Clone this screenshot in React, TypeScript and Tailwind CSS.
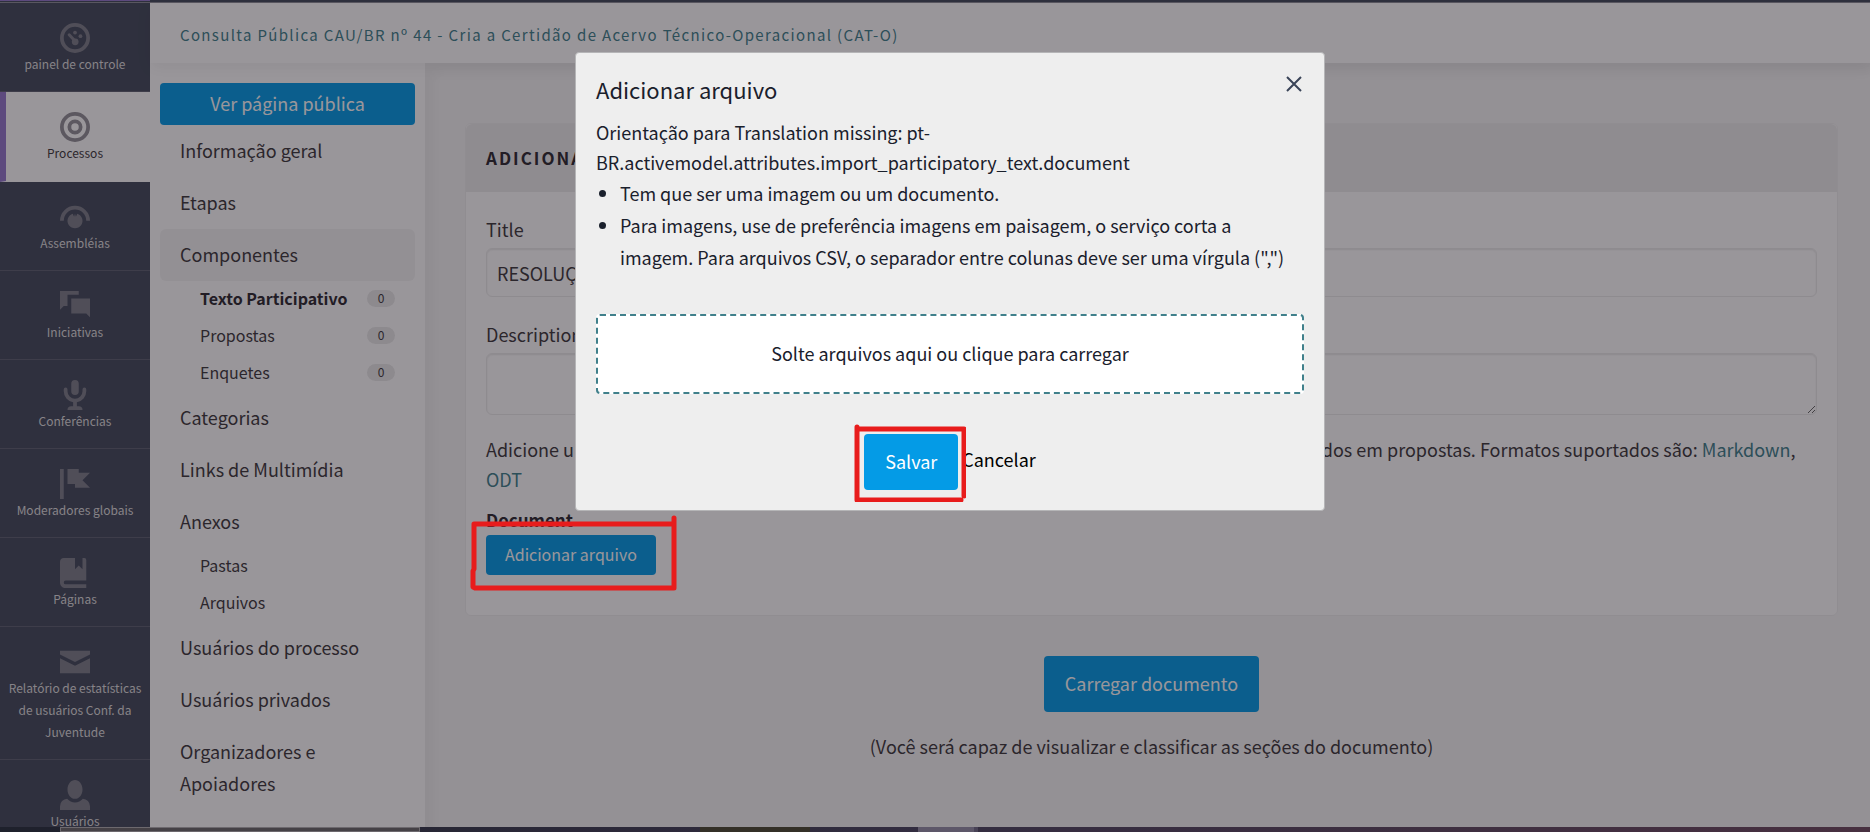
import type { ReactNode } from "react";

const navItems: { label: string; icon: ReactNode; active?: boolean }[] = [
  {
    label: "painel de controle",
    icon: (
      <>
        <circle cx="4" cy="4" r="3.5" fill="none" stroke="currentColor" />
        <path d="M2.45 3.15L4 4.8" fill="none" stroke="currentColor" strokeWidth=".8" strokeLinecap="round" />
        <circle cx="4" cy="2.55" r=".5" />
        <circle cx="5.45" cy="3.5" r=".5" />
        <circle cx="4.05" cy="5" r=".9" />
      </>
    ),
  },
  {
    label: "Processos",
    active: true,
    icon: (
      <g fill="none" stroke="currentColor">
        <circle cx="4" cy="4" r="3.5" />
        <circle cx="4" cy="4" r="1.5" />
      </g>
    ),
  },
  {
    label: "Assembléias",
    icon: (
      <path d="M4 1a4 4 0 0 0-4 4h1a3 3 0 0 1 6 0h1a4 4 0 0 0-4-4zM4.6 3.1L4.25 3.9 4 3.1l-.25.8-.35-.8A2 2 0 1 0 4.6 3.1z" />
    ),
  },
  {
    label: "Iniciativas",
    icon: <path d="M0 0v5l1-1h1V1h3V0H0zm3 2v4h4l1 1V2H3z" />,
  },
  {
    label: "Conferências",
    icon: (
      <path d="M4 0a1.03 1.03 0 0 0-1 1.06V3a1 1 0 0 0 2 0V1.06A1.03 1.03 0 0 0 4 0zM1.5 2a.5.5 0 0 0-.5.5V3a3.01 3.01 0 0 0 2.5 2.96V7H3a1 1 0 0 0-1 1h4a1 1 0 0 0-1-1h-.5V5.96A3.01 3.01 0 0 0 7 3v-.5a.5.5 0 1 0-1 0V3a2 2 0 1 1-4 0v-.5A.5.5 0 0 0 1.5 2z" />
    ),
  },
  {
    label: "Moderadores globais",
    icon: <path d="M0 0v8h1V0H0zm2 0v4h2v1h4L6 3l2-2H5V0H2z" />,
  },
  {
    label: "Páginas",
    icon: (
      <path d="M1 0C.45 0 0 .45 0 1v5.5C0 7.33.67 8 1.5 8H7V7H1.5a.5.5 0 0 1 0-1H7V.5a.5.5 0 0 0-.5-.5H6v3L5 2 4 3V0H1z" />
    ),
  },
  {
    label: "Relatório de estatísticas de usuários Conf. da Juventude",
    icon: <path d="M0 1v1l4 2 4-2V1H0zm0 2v4h8V3L4 5 0 3z" />,
  },
  {
    label: "Usuários",
    icon: (
      <path d="M4 0C2.9 0 2 1.12 2 2.5S2.9 5 4 5s2-1.12 2-2.5S5.1 0 4 0zM1.91 5A2 2 0 0 0 0 7v1h8V7a2 2 0 0 0-1.91-2A2.92 2.92 0 0 1 4 6a2.92 2.92 0 0 1-2.09-1z" />
    ),
  },
];

type Sub = { label: string; count?: number; active?: boolean };
const menu: { label: string; active?: boolean; children?: Sub[] }[] = [
  { label: "Informação geral" },
  { label: "Etapas" },
  {
    label: "Componentes",
    active: true,
    children: [
      { label: "Texto Participativo", count: 0, active: true },
      { label: "Propostas", count: 0 },
      { label: "Enquetes", count: 0 },
    ],
  },
  { label: "Categorias" },
  { label: "Links de Multimídia" },
  { label: "Anexos", children: [{ label: "Pastas" }, { label: "Arquivos" }] },
  { label: "Usuários do processo" },
  { label: "Usuários privados" },
  { label: "Organizadores e Apoiadores" },
];

function MainNav() {
  return (
    <nav className="w-[150px] shrink-0 overflow-hidden bg-[#434b5c]">
      <ul>
        {navItems.map((item) => (
          <li key={item.label}>
            <a
              href="#"
              className={
                item.active
                  ? "flex flex-col items-center border-b border-l-6 border-b-[#fefefe] border-l-[#9478cd] bg-[#fefefe] pt-5 pr-1.5 pb-[17px] text-center text-[12px] leading-[22px] text-[#3d393c]"
                  : "flex flex-col items-center border-b border-[#5e6271] px-1 pt-5 pb-4 text-center text-[12px] leading-[22px] text-[#dedcdd]"
              }
            >
              <svg
                viewBox="0 0 8 8"
                fill="currentColor"
                aria-hidden="true"
                className={item.active ? "size-[30px] shrink-0 text-[#929097]" : "size-[30px] shrink-0 text-[#7e7f8a]"}
              >
                {item.icon}
              </svg>
              {item.label}
            </a>
          </li>
        ))}
      </ul>
    </nav>
  );
}

function SideMenu() {
  return (
    <aside className="w-[275px] shrink-0 bg-[#fefefe] px-2.5 pt-5">
      <a
        href="#"
        className="flex h-[42px] items-center justify-center rounded bg-[#049be6] pb-0.5 text-[18px] text-[#fefefe]"
      >
        Ver página pública
      </a>
      <ul className="text-[18px] leading-8 text-[#3d393c]">
        {menu.map((entry) => (
          <li key={entry.label}>
            <a
              href="#"
              className={
                entry.active
                  ? "block rounded-md bg-[#f3f3f3] px-5 pt-[9px] pb-[11px]"
                  : "block px-5 pt-[9px] pb-[11px]"
              }
            >
              {entry.label}
            </a>
            {entry.children && (
              <ul className="text-[16px]">
                {entry.children.map((sub) => (
                  <li key={sub.label}>
                    <a href="#" className="flex h-[37px] items-center justify-between pr-5 pb-[3px] pl-10">
                      <span className={sub.active ? "font-bold text-[#2c2930]" : ""}>{sub.label}</span>
                      {sub.count !== undefined && (
                        <span className="flex h-[17px] w-7 items-center justify-center rounded-full bg-[#e8e8e8] text-[12px]">
                          {sub.count}
                        </span>
                      )}
                    </a>
                  </li>
                ))}
              </ul>
            )}
          </li>
        ))}
      </ul>
    </aside>
  );
}

function ImportForm() {
  return (
    <main className="min-w-0 flex-1 bg-[#f5f5f5] px-10 pt-[60px] text-[18px] leading-[30px] text-[#3d393c] shadow-[inset_10px_10px_12px_rgba(0,0,0,0.03)] 2xl:pr-8">
      <form>
        <section className="rounded-md border border-[#eeeeee] bg-[#fefefe]">
          <h2 className="flex h-[68px] items-center rounded-t-md bg-[#ececec] px-5 text-[17px] font-semibold tracking-[2px] text-[#2c2930] uppercase">
            Adicionar documento
          </h2>
          <div className="px-5 pt-[22px] pb-10">
            <label className="block">
              Title
              <input
                type="text"
                defaultValue="RESOLUÇÃO CAU/BR"
                className="mt-1 block h-[49px] w-full rounded-md border border-[#eaeaea] px-2.5 text-[18px] shadow-[inset_0_1px_2px_rgba(10,10,10,0.1)]"
              />
            </label>
            <label className="mt-[22px] block">
              Description
              <textarea className="mt-1 block h-[62px] w-full rounded-md border border-[#eaeaea] px-2.5 shadow-[inset_0_1px_2px_rgba(10,10,10,0.1)]" />
            </label>
            <p className="mt-[19px]">
              Adicione um documento de texto para ser importado. Cada seção, subseção ou artigo serão convertidos em
              propostas. Formatos suportados são:{" "}
              <a href="#" className="text-[#40808b]">
                Markdown
              </a>
              ,{" "}
              <a href="#" className="text-[#40808b]">
                ODT
              </a>
            </p>
            <p className="mt-[11px] text-[17px] font-bold text-[#2c2930]">Document</p>
            <button type="button" className="h-10 rounded bg-[#049be6] px-[19px] pb-0.5 text-[16px] text-[#fefefe]">
              Adicionar arquivo
            </button>
          </div>
        </section>
        <div className="mt-10 flex flex-col items-center gap-[19px]">
          <button type="submit" className="h-14 rounded bg-[#049be6] px-[21px] pb-0.5 text-[18px] text-[#fefefe]">
            Carregar documento
          </button>
          <p>(Você será capaz de visualizar e classificar as seções do documento)</p>
        </div>
      </form>
    </main>
  );
}

function UploadDialog() {
  return (
    <div
      role="dialog"
      aria-labelledby="upload-title"
      className="relative mt-[52px] w-[750px] rounded border border-[#b5b5b7] bg-[#eeeeee] px-5 pt-[18px] pb-5 text-[18px] text-[#1a202c]"
    >
      <button
        type="button"
        aria-label="Fechar"
        className="absolute top-[15px] right-3.5 flex size-8 items-center justify-center"
      >
        <svg viewBox="0 0 16 16" className="size-4" stroke="#3a4458" strokeWidth="2" aria-hidden="true">
          <path d="M1 1l14 14M15 1L1 15" />
        </svg>
      </button>
      <h3 id="upload-title" className="text-[22px] leading-9">
        Adicionar arquivo
      </h3>
      <p className="mt-2.5 leading-[30px]">
        Orientação para Translation missing: pt-
        <br />
        BR.activemodel.attributes.import_participatory_text.document
      </p>
      <ul className="list-disc pl-6 leading-8">
        <li>Tem que ser uma imagem ou um documento.</li>
        <li>
          Para imagens, use de preferência imagens em paisagem, o serviço corta a imagem. Para arquivos CSV, o separador
          entre colunas deve ser uma vírgula (&quot;,&quot;)
        </li>
      </ul>
      <button
        type="button"
        className="mt-[41px] block h-20 w-full rounded border-2 border-dashed border-[#40808b] bg-white pb-0.5"
      >
        Solte arquivos aqui ou clique para carregar
      </button>
      <div className="mt-10 flex items-center justify-center gap-1">
        <div className="relative">
          <button type="button" className="block h-14 rounded bg-[#049be6] px-[21px] pb-0.5 text-white">
            Salvar
          </button>
          <svg
            viewBox="0 0 112 78"
            className="pointer-events-none absolute -top-2.5 -left-2.5 h-[78px] w-28"
            fill="none"
            stroke="#e81c1c"
            strokeWidth="5"
            strokeLinecap="round"
            strokeLinejoin="round"
            aria-hidden="true"
          >
            <path d="M3 3v73h104M3 5h107v67" />
          </svg>
        </div>
        <button type="button" className="pb-[5px] text-black">
          Cancelar
        </button>
      </div>
    </div>
  );
}

export default function App() {
  return (
    <div className="relative flex h-screen flex-col overflow-hidden font-['Noto_Sans_CJK_JP',sans-serif]">
      <div className="h-[3px] shrink-0 border-b border-[#8e8f98] bg-[#434b5c]">
        <div className="h-px w-[150px] bg-[#9478cd]" />
      </div>
      <div className="flex min-h-0 flex-1">
        <MainNav />
        <div className="flex min-w-0 flex-1 flex-col">
          <header className="relative flex h-[60px] shrink-0 items-center bg-[#fefefe] px-[30px] pt-1 shadow-[0_5px_15px_rgba(0,0,0,0.06)]">
            <a href="#" className="text-[15px] tracking-[0.09em] text-[#40808b]">
              Consulta Pública CAU/BR nº 44 - Cria a Certidão de Acervo Técnico-Operacional (CAT-O)
            </a>
          </header>
          <div className="flex min-h-0 flex-1">
            <SideMenu />
            <ImportForm />
          </div>
        </div>
      </div>
      <div className="flex h-[5px] shrink-0 bg-linear-to-r from-[#26303c] via-[#4a4560] to-[#6e4a60]">
        <div className="ml-[60px] h-full w-[360px] border border-[#b0aeb0] bg-[#6a686a]" />
        <div className="ml-[280px] h-full w-[110px] bg-[#4d4a34]" />
        <div className="ml-[108px] h-full w-[60px] border-r-4 border-[#6f6a86] bg-[#958fa8]" />
      </div>
      <div className="absolute inset-0 flex items-start justify-center bg-[rgba(20,15,23,0.43)] pl-[30px]">
        <UploadDialog />
      </div>
      <svg
        viewBox="0 0 208 80"
        className="pointer-events-none absolute top-[513px] left-[470px] h-20 w-52"
        fill="none"
        stroke="#e81c1c"
        strokeWidth="5"
        strokeLinecap="round"
        strokeLinejoin="round"
        aria-hidden="true"
      >
        <path d="M4 11h200M4 11v45l-1 2v16l2 1h199V5" />
      </svg>
    </div>
  );
}
